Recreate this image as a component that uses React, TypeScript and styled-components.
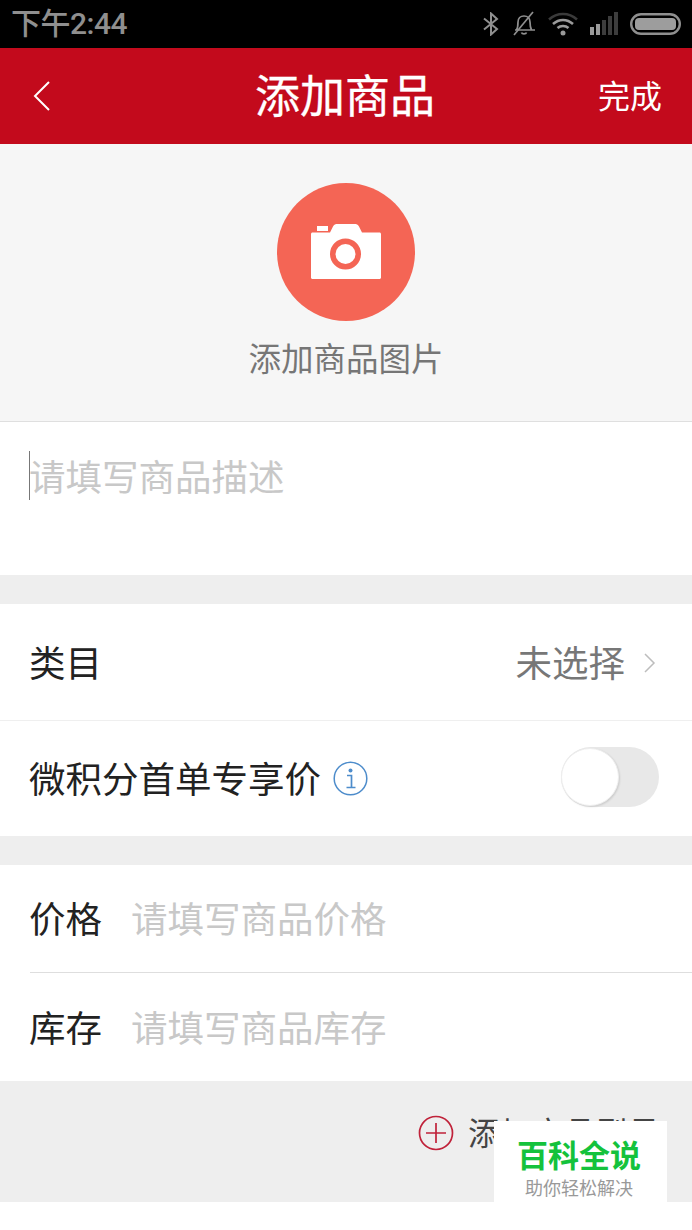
import { createGlobalStyle, styled } from 'styled-components';

const GlobalStyle = createGlobalStyle`
  html, body {
    margin: 0;
    padding: 0;
    background: #fff;
  }
  body {
    font-family: "Roboto", "Noto Sans CJK SC", sans-serif;
  }
  * {
    box-sizing: border-box;
  }
`;

const Page = styled.div`
  width: 692px;
  height: 1230px;
  position: relative;
  overflow: hidden;
  background: #fff;
  display: flex;
  flex-direction: column;
`;

const StatusBar = styled.div`
  height: 48px;
  background: #000;
  display: flex;
  align-items: center;
  justify-content: space-between;
  padding: 0 11px 0 11px;
  color: #8f8f8f;
`;

const StatusTime = styled.span`
  font-size: 30px;
  line-height: 48px;
  font-weight: 500;
  letter-spacing: -0.5px;
`;

const StatusIcons = styled.div`
  display: flex;
  align-items: center;
  gap: 12px;
`;

const Header = styled.header`
  height: 96px;
  background: #c30a1c;
  color: #fff;
  display: grid;
  grid-template-columns: 1fr auto 1fr;
  align-items: center;
  padding: 0 30px 0 32px;
`;

const BackButton = styled.div`
  display: flex;
  align-items: center;
`;

const Title = styled.h1`
  margin: 0;
  padding: 4px 4px 0 0;
  font-size: 45px;
  font-weight: 400;
  -webkit-text-stroke: 0.3px #fff;
  line-height: 60px;
`;

const DoneButton = styled.div`
  justify-self: end;
  padding-top: 2px;
  font-size: 32px;
  line-height: 48px;
`;

const PhotoSection = styled.section`
  height: 278px;
  background: #f6f6f6;
  border-bottom: 1px solid #dfdfdf;
  display: flex;
  flex-direction: column;
  align-items: center;
  padding-top: 39px;
`;

const PhotoCircle = styled.div`
  width: 138px;
  height: 138px;
  border-radius: 50%;
  background: #f46555;
  display: flex;
  align-items: center;
  justify-content: center;
`;

const CameraIcon = styled.svg`
  margin-top: -1px;
`;

const PhotoLabel = styled.div`
  margin-top: 16px;
  font-size: 32.500px;
  line-height: 46px;
  color: #767676;
`;

const Description = styled.div`
  height: 153px;
  padding: 33px 0 0 29px;
  position: relative;
  font-size: 36.500px;
  line-height: 48px;
  color: #c8c8c8;
`;

const Caret = styled.span`
  position: absolute;
  left: 29px;
  top: 29px;
  width: 1px;
  height: 49px;
  background: #777;
`;

const Gap = styled.div<{ $height: number }>`
  height: ${(p) => p.$height}px;
  background: #eeeeee;
  flex-shrink: 0;
`;

const Row = styled.div<{ $height: number }>`
  height: ${(p) => p.$height}px;
  display: flex;
  align-items: center;
  padding: 0 33px 0 29px;
  background: #fff;
`;

const RowLabel = styled.span`
  padding-top: 5px;
  font-size: 36.500px;
  line-height: 48px;
  color: #222;
`;

const RowValue = styled.span`
  margin-left: auto;
  padding-top: 5px;
  font-size: 36.500px;
  line-height: 48px;
  color: #777;
`;

const Chevron = styled.span`
  display: flex;
  margin-left: 18px;
  margin-right: 3px;
  padding-top: 2px;
`;

const Divider = styled.div<{ $inset: number; $color: string }>`
  height: 1px;
  margin-left: ${(p) => p.$inset}px;
  background: ${(p) => p.$color};
  flex-shrink: 0;
`;

const InfoIcon = styled.span`
  display: flex;
  margin-left: 12px;
`;

const Toggle = styled.div`
  margin-left: auto;
  margin-bottom: 3px;
  width: 98px;
  height: 60px;
  border-radius: 30px;
  background: #e8e8e8;
  position: relative;
`;

const ToggleKnob = styled.span`
  position: absolute;
  left: 0;
  top: 1px;
  width: 58px;
  height: 58px;
  border-radius: 50%;
  background: #fff;
  border: 1px solid #eeeeee;
  box-shadow: 1px 1px 2px rgba(0, 0, 0, 0.12);
`;

const Placeholder = styled.span`
  margin-left: 29px;
  padding-top: 5px;
  font-size: 36.500px;
  line-height: 48px;
  color: #c8c8c8;
`;

const AddBar = styled.div`
  height: 121px;
  background: #eeeeee;
  display: flex;
  align-items: center;
  justify-content: flex-end;
  padding: 0 32px 0 0;
`;

const AddInner = styled.div`
  display: flex;
  align-items: center;
  gap: 14px;
  margin-bottom: 18px;
`;

const AddLabel = styled.span`
  padding-top: 2px;
  font-size: 32px;
  line-height: 44px;
  color: #444;
`;

const Watermark = styled.div`
  position: absolute;
  left: 494px;
  top: 1121px;
  width: 173px;
  height: 84px;
  background: #fff;
  display: flex;
  flex-direction: column;
  align-items: center;
  padding: 17px 3px 0 0;
`;

const WatermarkTitle = styled.div`
  font-size: 31px;
  line-height: 38px;
  font-weight: 700;
  color: #14c23c;
`;

const WatermarkSub = styled.div`
  font-size: 18px;
  line-height: 24px;
  margin-top: 1px;
  color: #999;
`;

const App = () => {
  return (
    <Page>
      <GlobalStyle />
      <StatusBar>
        <StatusTime>下午2:44</StatusTime>
        <StatusIcons>
          <svg width="18" height="24" viewBox="0 0 18 24" fill="none" stroke="#8f8f8f" strokeWidth="2">
            <path d="M2 6.500 15 17 9 22.500V1.500L15 7 2 17.500" />
          </svg>
          <svg width="24" height="26" viewBox="0 0 24 26" fill="none" stroke="#8f8f8f" strokeWidth="1.700">
            <path d="M3 19h20M19.500 19c-1-2-1.500-4-1.500-8 0-3.500-2.500-6-6-6s-6 2.500-6 6c0 3-.3 6-1.500 8" />
            <path d="M9.500 21.500c.5 1.700 4.500 1.700 5 0" />
            <path d="M2 24 21 1" />
          </svg>
          <svg width="30" height="24" viewBox="0 0 30 24" fill="none">
            <path d="M1 7.500c8-7.500 20-7.500 28 0" stroke="#3a3a3a" strokeWidth="2.500" />
            <path d="M5 12c6-5.500 14-5.500 20 0" stroke="#9a9a9a" strokeWidth="2.500" />
            <path d="M9.500 16c3-2.700 8-2.700 11 0" stroke="#9a9a9a" strokeWidth="2.500" />
            <circle cx="15" cy="21" r="2.500" fill="#9a9a9a" />
          </svg>
          <svg width="28" height="24" viewBox="0 0 28 24">
            <rect x="0" y="15" width="4" height="8" fill="#9a9a9a" />
            <rect x="6" y="12" width="4" height="11" fill="#9a9a9a" />
            <rect x="12" y="8" width="4" height="15" fill="#3d3d3d" />
            <rect x="18" y="4" width="4" height="19" fill="#3d3d3d" />
            <rect x="24" y="0" width="4" height="23" fill="#3d3d3d" />
          </svg>
          <svg width="51" height="22" viewBox="0 0 51 22">
            <rect x="1.200" y="1.200" width="48.600" height="19.600" rx="9.800" fill="none" stroke="#8f8f8f" strokeWidth="2.400" />
            <rect x="5" y="5" width="41" height="12" rx="4" fill="#9d9d9d" />
          </svg>
        </StatusIcons>
      </StatusBar>

      <Header>
        <BackButton>
          <svg width="20" height="32" viewBox="0 0 20 32" fill="none" stroke="#fff" strokeWidth="2">
            <path d="M17 2 3 16l14 14" />
          </svg>
        </BackButton>
        <Title>添加商品</Title>
        <DoneButton>完成</DoneButton>
      </Header>

      <PhotoSection>
        <PhotoCircle>
          <CameraIcon width="70" height="55" viewBox="0 0 70 55">
            <path fill="#fff" d="M6 2h11v5H6z" />
            <path
              fill="#fff"
              d="M1.500 8.500h17.500L22 2.500C22.800 1 24 0 25.500 0h19c1.500 0 2.700 1 3.500 2.500l3 6h17.500c.8 0 1.500.7 1.500 1.500v43.500c0 .8-.7 1.500-1.500 1.500H1.500C.7 55 0 54.300 0 53.500V10c0-.8.7-1.500 1.500-1.500z"
            />
            <circle cx="34.500" cy="30" r="15.500" fill="#f46555" />
            <circle cx="34.500" cy="30" r="10" fill="#fff" />
          </CameraIcon>
        </PhotoCircle>
        <PhotoLabel>添加商品图片</PhotoLabel>
      </PhotoSection>

      <Description>
        <Caret />
        请填写商品描述
      </Description>

      <Gap $height={29} />

      <Row $height={116}>
        <RowLabel>类目</RowLabel>
        <RowValue>未选择</RowValue>
        <Chevron>
          <svg width="13" height="22" viewBox="0 0 13 22" fill="none" stroke="#bdbdbd" strokeWidth="1.500">
            <path d="M2 2l9 9-9 9" />
          </svg>
        </Chevron>
      </Row>
      <Divider $inset={0} $color="#efefef" />
      <Row $height={115}>
        <RowLabel>微积分首单专享价</RowLabel>
        <InfoIcon>
          <svg width="35" height="35" viewBox="0 0 35 35" fill="none">
            <circle cx="17.500" cy="17.500" r="16.300" stroke="#4d8ccb" strokeWidth="1.500" />
            <circle cx="17.500" cy="9.500" r="2" fill="#4d8ccb" />
            <path d="M14 14.500h4.500v12M13.500 26.500h9" stroke="#4d8ccb" strokeWidth="1.700" />
          </svg>
        </InfoIcon>
        <Toggle>
          <ToggleKnob />
        </Toggle>
      </Row>

      <Gap $height={29} />

      <Row $height={107}>
        <RowLabel>价格</RowLabel>
        <Placeholder>请填写商品价格</Placeholder>
      </Row>
      <Divider $inset={30} $color="#dedede" />
      <Row $height={108}>
        <RowLabel>库存</RowLabel>
        <Placeholder>请填写商品库存</Placeholder>
      </Row>

      <AddBar>
        <AddInner>
          <svg width="36" height="36" viewBox="0 0 36 36" fill="none" stroke="#c0223a" strokeWidth="1.700">
            <circle cx="18" cy="18" r="16.500" />
            <path d="M18 8v20M8 18h20" />
          </svg>
          <AddLabel>添加商品型号</AddLabel>
        </AddInner>
      </AddBar>

      <Watermark>
        <WatermarkTitle>百科全说</WatermarkTitle>
        <WatermarkSub>助你轻松解决</WatermarkSub>
      </Watermark>
    </Page>
  );
};

export default App;
